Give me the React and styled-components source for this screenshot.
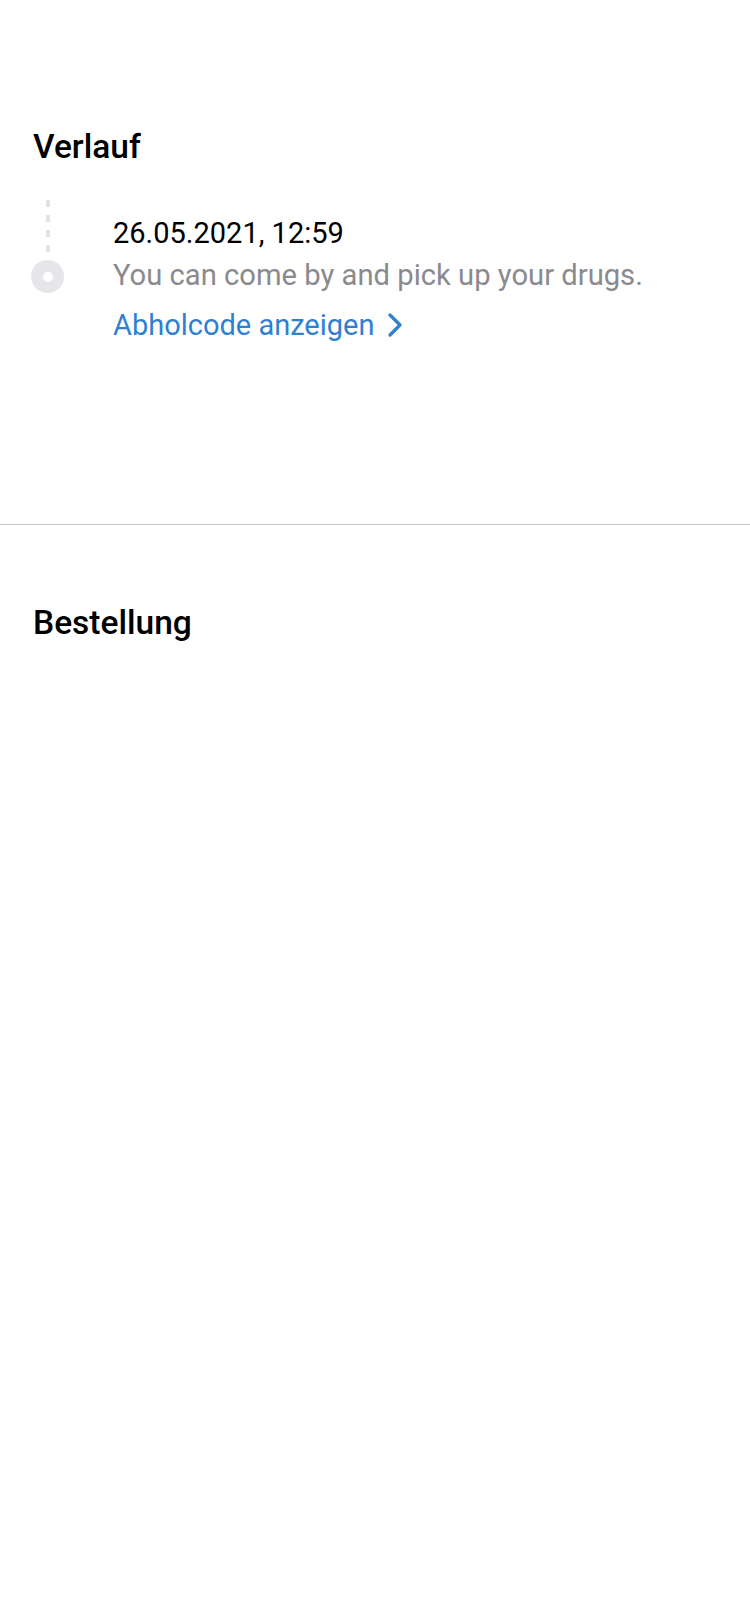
import styled, { createGlobalStyle } from 'styled-components';

const GlobalStyle = createGlobalStyle`
	body {
		margin: 0;
		background: #ffffff;
		font-family: Roboto, "Liberation Sans", sans-serif;
		-webkit-font-smoothing: antialiased;
	}
`;

const Chevron = () => (
	<ChevronSvg viewBox="0 0 16 24" width="16" height="24">
		<polyline points="3,2 13,12 3,22" />
	</ChevronSvg>
);

const App = () => {
	return (
		<Page>
			<GlobalStyle />
			<Section>
				<Heading>Verlauf</Heading>
				<Timeline>
					<TimelineItem>
						<Track>
							<Dashes />
							<Dot />
						</Track>
						<Entry>
							<DateText>26.05.2021, 12:59</DateText>
							<Message>You can come by and pick up your drugs.</Message>
							<ActionLink>
								Abholcode anzeigen
								<Chevron />
							</ActionLink>
						</Entry>
					</TimelineItem>
				</Timeline>
			</Section>
			<Divider />
			<OrderSection>
				<Heading>Bestellung</Heading>
			</OrderSection>
		</Page>
	);
};

export default App;

/* Styles */
const Page = styled.main`
	width: 750px;
	min-height: 1624px;
	display: flex;
	flex-direction: column;
	background: #ffffff;
`;

const Section = styled.section`
	padding: 127px 33px 181px;
	display: flex;
	flex-direction: column;
`;

const OrderSection = styled.section`
	padding: 78px 33px 0;
`;

const Heading = styled.h2`
	margin: 0;
	font-size: 33.5px;
	line-height: 40px;
	font-weight: 500;
	color: #000000;
`;

const Timeline = styled.div`
	margin-top: 33px;
	display: flex;
	flex-direction: column;
`;

const TimelineItem = styled.div`
	display: flex;
	align-items: flex-start;
`;

const Track = styled.div`
	width: 33px;
	margin-left: -2px;
	display: flex;
	flex-direction: column;
	align-items: center;
	gap: 4px;
`;

const Dashes = styled.div`
	width: 4px;
	height: 56px;
	background: repeating-linear-gradient(
		to bottom,
		#e3e3e7 0,
		#e3e3e7 7px,
		transparent 7px,
		transparent 15px
	);
`;

const Dot = styled.div`
	width: 33px;
	height: 33px;
	border-radius: 50%;
	background: #e5e5ea;
	display: flex;
	align-items: center;
	justify-content: center;

	&::after {
		content: '';
		width: 10px;
		height: 10px;
		border-radius: 50%;
		background: #ffffff;
	}
`;

const Entry = styled.div`
	margin-left: 49px;
	padding-top: 15px;
	display: flex;
	flex-direction: column;
`;

const DateText = styled.div`
	font-size: 29px;
	line-height: 36px;
	color: #000000;
`;

const Message = styled.div`
	margin-top: 6px;
	font-size: 29.2px;
	line-height: 36px;
	color: #8a8a8e;
`;

const ActionLink = styled.a`
	margin-top: 14px;
	display: inline-flex;
	align-items: center;
	gap: 13px;
	font-size: 29px;
	line-height: 36px;
	color: #2f7fd3;
	cursor: pointer;
`;

const ChevronSvg = styled.svg`
	fill: none;
	stroke: #2f7fd3;
	stroke-width: 3.2;
	stroke-linecap: round;
	stroke-linejoin: round;
`;

const Divider = styled.hr`
	margin: 0;
	border: none;
	height: 1px;
	background: #c8c8cc;
`;
